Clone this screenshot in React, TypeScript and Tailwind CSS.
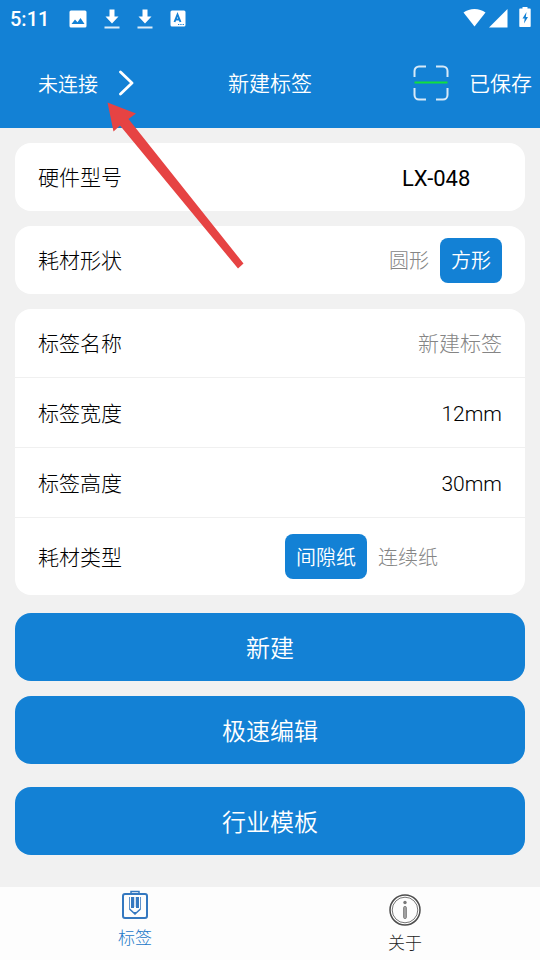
import { useState } from 'react'
import type { ReactNode } from 'react'
import clsx from 'clsx'

const shapes = ['圆形', '方形']
const paperTypes = ['间隙纸', '连续纸']

function DownloadIcon() {
  return (
    <svg viewBox="0 0 16 22" className="w-4 h-[22px]" aria-hidden="true">
      <path d="M5.500 1.500h5v7h4L8 15.500 1.500 8.500h4z" fill="#fff" />
      <path d="M0.500 19.500h15" stroke="#dcecf8" strokeWidth="2" />
    </svg>
  )
}

function StatusBar() {
  return (
    <div className="flex items-center justify-between h-[38px] pl-[10px] pr-[9px]">
      <div className="flex items-center">
        <span className="text-xl font-medium w-[59px]">5:11</span>
        <svg viewBox="0 0 18 18" className="w-[18px] h-[18px]" aria-hidden="true">
          <rect x="0.500" y="0.500" width="17" height="17" rx="1.500" fill="#fff" />
          <path d="M2.500 14l3.500-4.500 2.500 2.700 3-4.200 4 6z" fill="#1381d5" />
        </svg>
        <div className="flex gap-[17px] ml-[17px]">
          <DownloadIcon />
          <DownloadIcon />
        </div>
        <svg viewBox="0 0 16 17" className="w-4 h-[17px] ml-[17px] -mt-0.5" aria-hidden="true">
          <rect x="0.500" y="0.500" width="15" height="16" rx="1.500" fill="#fff" />
          <path d="M4.500 12L7.500 4.500 10.500 12M5.500 9.500h4" stroke="#1381d5" strokeWidth="1.900" fill="none" />
          <path d="M8 14.500h6" stroke="#1381d5" strokeWidth="1.200" strokeDasharray="1.300 1" />
        </svg>
      </div>
      <div className="flex items-center">
        <svg viewBox="0 0 23 19" className="w-[23px] h-[19px] -mt-1" aria-hidden="true">
          <path d="M0.500 4.500C6.500-0.300 16.500-0.300 22.500 4.500L11.500 18.500z" fill="#fff" />
        </svg>
        <svg viewBox="0 0 19 19" className="w-[19px] h-[19px] ml-[3px] -mt-0.5" aria-hidden="true">
          <path d="M18.500 0v18.500H0z" fill="#fff" />
        </svg>
        <svg viewBox="0 0 12 20" className="w-3 h-5 ml-[11px] -mt-1" aria-hidden="true">
          <path d="M3.500 0h5v1.500H11a.7.7 0 0 1 .7.7v17a.7.7 0 0 1-.7.700H1a.7.7 0 0 1-.7-.700v-17a.7.7 0 0 1 .7-.700h2.500z" fill="#fff" />
          <path d="M7.500 5L3.500 11.500h2.200L5 16.500l4-6.500H6.800z" fill="#1381d5" />
        </svg>
      </div>
    </div>
  )
}

function ScanIcon() {
  return (
    <svg viewBox="0 0 36 36" className="w-9 h-9" fill="none" aria-hidden="true">
      <path
        d="M1.500 12V6a4.500 4.500 0 0 1 4.500-4.500h7M23 1.500h7A4.500 4.500 0 0 1 34.500 6v6M34.500 23v7a4.500 4.500 0 0 1-4.500 4.500h-7M13 34.500H6A4.500 4.500 0 0 1 1.500 30v-7"
        stroke="#d6e9f8"
        strokeWidth="2"
      />
      <path d="M1.500 17.500h33" stroke="#12e03c" strokeWidth="2" />
    </svg>
  )
}

function LabelIcon() {
  return (
    <svg viewBox="0 0 28 30" className="w-7 h-[30px]" fill="none" aria-hidden="true">
      <rect x="2" y="4" width="24" height="24" rx="2" stroke="#3478c0" strokeWidth="2" />
      <path d="M10 4V1.500h8V4" stroke="#3478c0" strokeWidth="1.500" />
      <path d="M8.500 7v12M19.500 7v12" stroke="#5f93cc" strokeWidth="1" />
      <path d="M11.500 7v11M16.500 7v11" stroke="#3478c0" strokeWidth="3" />
      <path d="M14 7v10" stroke="#a9c5e6" strokeWidth="1" />
      <path d="M8.500 19l5.500 5 5.500-5" stroke="#3478c0" strokeWidth="1.500" />
      <path d="M12 22h4l-2 2.500z" fill="#3478c0" />
    </svg>
  )
}

function InfoIcon() {
  return (
    <svg viewBox="0 0 32 32" className="w-8 h-8" fill="none" aria-hidden="true">
      <circle cx="16" cy="16" r="15" stroke="#4c4c4c" strokeWidth="1.500" />
      <circle cx="16" cy="16" r="12.800" stroke="#777" strokeWidth="1" />
      <circle cx="16" cy="8.500" r="1.700" fill="#777" />
      <rect x="14.700" y="12.500" width="2.600" height="12" rx="1" fill="#aaa" stroke="#777" />
    </svg>
  )
}

function Segmented({
  name,
  label,
  options,
  value,
  onChange,
}: {
  name: string
  label: string
  options: string[]
  value: string
  onChange: (v: string) => void
}) {
  return (
    <div role="radiogroup" aria-label={label} className="flex">
      {options.map((option) => (
        <label
          key={option}
          className={clsx(
            'relative flex items-center h-[45px] px-[11px] pt-0.5 rounded-lg text-xl cursor-pointer',
            value === option ? 'bg-[#1381d5] text-white font-[350]' : 'text-[#858585] font-light',
          )}
        >
          <input
            type="radio"
            name={name}
            value={option}
            checked={value === option}
            onChange={() => onChange(option)}
            className="sr-only"
          />
          {option}
        </label>
      ))}
    </div>
  )
}

function Card({ children }: { children: ReactNode }) {
  return <div className="bg-white rounded-2xl divide-y divide-[#f0f0f0]">{children}</div>
}

function BigButton({ children, className }: { children: ReactNode; className?: string }) {
  return (
    <button
      type="button"
      className={clsx('w-full h-[68px] pt-1 rounded-2xl bg-[#1381d5] text-white text-2xl font-[350]', className)}
    >
      {children}
    </button>
  )
}

export default function App() {
  const [model, setModel] = useState('LX-048')
  const [shape, setShape] = useState('方形')
  const [paper, setPaper] = useState('间隙纸')
  const [name, setName] = useState('新建标签')
  const [width, setWidth] = useState('12mm')
  const [height, setHeight] = useState('30mm')

  const inputClass = 'flex-1 min-w-0 text-right bg-transparent outline-none'

  return (
    <div className="relative min-h-screen flex flex-col bg-[#f1f1f1] text-[21px] font-light text-black font-[Roboto,'Noto_Sans_CJK_SC',sans-serif]">
      <header className="bg-[#1381d5] text-white">
        <StatusBar />
        <div className="grid grid-cols-[1fr_auto_1fr] items-center h-[90px] px-2 font-[350]">
          <button type="button" className="flex items-center gap-[21px] pl-[30px] text-xl">
            <span className="pt-1">未连接</span>
            <svg viewBox="0 0 16 26" className="w-4 h-[26px]" fill="none" aria-hidden="true">
              <path d="M1.500 2l11.500 11-11.500 11" stroke="#fff" strokeWidth="2.800" strokeLinecap="round" strokeLinejoin="round" />
            </svg>
          </button>
          <h1 className="pt-1">新建标签</h1>
          <div className="flex items-center justify-end gap-5">
            <button type="button" aria-label="扫描">
              <ScanIcon />
            </button>
            <button type="button" className="pt-1">
              已保存
            </button>
          </div>
        </div>
      </header>

      <main className="flex-1 px-[15px] pt-[15px] pb-8">
        <div className="flex flex-col gap-[15px]">
          <Card>
            <div className="flex items-center justify-between h-[68px] pl-[23px] pr-[54px]">
              <label htmlFor="model" className="pt-1">
                硬件型号
              </label>
              <select
                id="model"
                value={model}
                onChange={(e) => setModel(e.target.value)}
                className="appearance-none bg-transparent outline-none pt-0.5 text-[22px] font-normal"
              >
                <option>LX-048</option>
              </select>
            </div>
          </Card>

          <Card>
            <div className="flex items-center justify-between h-[68px] px-[23px]">
              <span className="pt-1">耗材形状</span>
              <Segmented name="shape" label="耗材形状" options={shapes} value={shape} onChange={setShape} />
            </div>
          </Card>

          <Card>
            <div className="flex items-center h-[69px] pt-1 px-[23px]">
              <label htmlFor="name">标签名称</label>
              <input
                id="name"
                value={name}
                onChange={(e) => setName(e.target.value)}
                className={clsx(inputClass, 'text-[#858585]')}
              />
            </div>
            <div className="flex items-center h-[70px] pt-1 px-[23px]">
              <label htmlFor="width">标签宽度</label>
              <input id="width" value={width} onChange={(e) => setWidth(e.target.value)} className={inputClass} />
            </div>
            <div className="flex items-center h-[70px] pt-1 px-[23px]">
              <label htmlFor="height">标签高度</label>
              <input id="height" value={height} onChange={(e) => setHeight(e.target.value)} className={inputClass} />
            </div>
            <div className="flex items-center justify-between h-[77px] pl-[23px] pr-[76px]">
              <span className="pt-1">耗材类型</span>
              <Segmented name="paper" label="耗材类型" options={paperTypes} value={paper} onChange={setPaper} />
            </div>
          </Card>
        </div>

        <div className="pt-[18px]">
          <BigButton>新建</BigButton>
          <BigButton className="mt-[15px]">极速编辑</BigButton>
          <BigButton className="mt-[23px]">行业模板</BigButton>
        </div>
      </main>

      <nav className="grid grid-cols-2 h-[73px] bg-[#fdfdfd] text-[17px] leading-6">
        <a href="#label" className="flex flex-col items-center gap-1.5 pt-[3px] text-[#1b78c8]">
          <LabelIcon />
          标签
        </a>
        <a href="#about" className="flex flex-col items-center gap-[5px] pt-[7px] text-[#222]">
          <InfoIcon />
          关于
        </a>
      </nav>

      {/* Red pointer to the connection status */}
      <svg viewBox="0 0 138 168" className="absolute left-[107px] top-[102px] w-[138px] h-[168px] pointer-events-none" aria-hidden="true">
        <path d="M0.500 0.500L29 11.500l-7.500 5.500L136.500 161.500l-5.500 5L13 23.500l-6.500 6z" fill="#e64343" />
      </svg>
    </div>
  )
}
